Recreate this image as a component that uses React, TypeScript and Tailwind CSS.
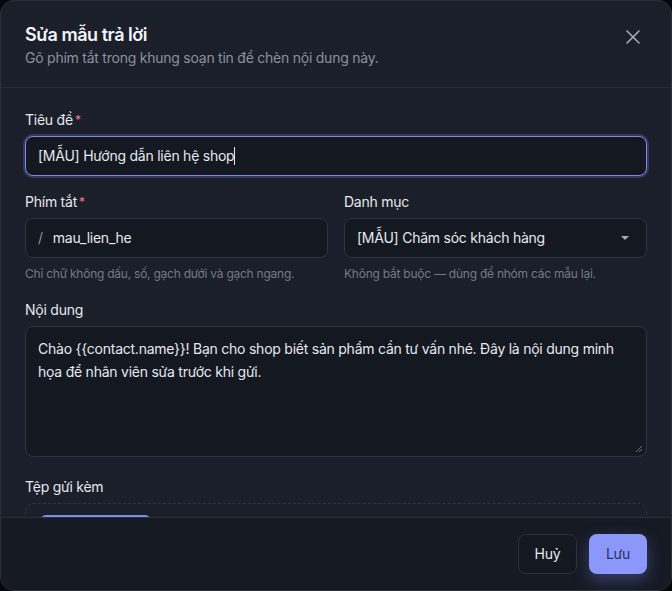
import { X } from 'lucide-react';

const font = { fontFamily: 'Inter, "Noto Sans", sans-serif' };

const bodyText =
  'Chào {{contact.name}}! Bạn cho shop biết sản phẩm cần tư vấn nhé. Đây là nội dung minh họa để nhân viên sửa trước khi gửi.';

function Label({ children, required }: { children: string; required?: boolean }) {
  return (
    <label className="block text-sm leading-5 text-[#e6e8ee] mb-1.5">
      {children}
      {required && <span className="text-[#f47c85] text-[12px] ml-0.5 align-top">*</span>}
    </label>
  );
}

export default function App() {
  return (
    <div className="w-[672px] h-[591px] bg-[#07080b] tracking-[-0.015em]" style={font}>
      <div className="w-full h-full flex flex-col rounded-[14px] border border-[#2b303c] bg-[#1b1f29] overflow-hidden">
        {/* header */}
        <div className="relative px-6 pt-[22px] pb-[19px] border-b border-[#262b36]">
          <h2 className="text-[18px] leading-6 font-semibold text-[#f3f4f7] tracking-[-0.025em]">Sửa mẫu trả lời</h2>
          <p className="text-sm leading-5 mt-px text-[#8a91a0]">Gõ phím tắt trong khung soạn tin để chèn nội dung này.</p>
          <button className="absolute right-[26px] top-[24px] text-[#a3a9b6]">
            <X size={24} strokeWidth={1.6} />
          </button>
        </div>

        {/* body */}
        <div className="flex-1 overflow-hidden px-6 pt-[22px]">
          <div>
            <Label required>Tiêu đề</Label>
            <div className="h-10 rounded-lg border border-[#7c86e6] bg-[#141821] ring-2 ring-[#4b5394]/50 flex items-center px-3 text-sm text-[#e6e8ee]">
              <span>[MẪU] Hướng dẫn liên hệ shop</span>
              <span className="w-px h-[18px] bg-[#e6e8ee]" />
            </div>
          </div>

          <div className="grid grid-cols-2 gap-4 mt-4">
            <div>
              <Label required>Phím tắt</Label>
              <div className="h-10 rounded-lg border border-[#2e3441] bg-[#141821] flex items-center px-3 text-sm text-[#e6e8ee]">
                <span className="text-[#8a91a0] mr-2.5">/</span>
                <span>mau_lien_he</span>
              </div>
              <p className="mt-2 text-xs leading-4 text-[#737a89]">Chỉ chữ không dấu, số, gạch dưới và gạch ngang.</p>
            </div>
            <div>
              <Label>Danh mục</Label>
              <div className="h-10 rounded-lg border border-[#2e3441] bg-[#141821] flex items-center justify-between px-3 text-sm text-[#e6e8ee]">
                <span>[MẪU] Chăm sóc khách hàng</span>
                <svg width="10" height="6" viewBox="0 0 10 6" className="mr-1">
                  <path d="M1 1h8L5 5z" fill="#a3a9b6" />
                </svg>
              </div>
              <p className="mt-2 text-xs leading-4 text-[#737a89]">Không bắt buộc — dùng để nhóm các mẫu lại.</p>
            </div>
          </div>

          <div className="mt-[18px]">
            <Label>Nội dung</Label>
            <div className="relative h-[131px] rounded-lg border border-[#2e3441] bg-[#141821] px-3 py-[10px] text-sm leading-[23px] text-[#e6e8ee]">
              <p>{bodyText}</p>
              <svg width="8" height="8" viewBox="0 0 8 8" className="absolute right-[3px] bottom-[3px]">
                <path d="M7 1 1 7M7 4 4 7" stroke="#6b7282" strokeWidth="1" />
              </svg>
            </div>
          </div>

          <div className="mt-5">
            <Label>Tệp gửi kèm</Label>
            <div className="rounded-lg border border-dashed border-[#2e3441] px-[14px] pt-[11px] h-20">
              <div className="w-[111px] h-9 rounded-md bg-[#2d3352] border-t-2 border-[#7f89ee]" />
            </div>
          </div>
        </div>

        {/* footer */}
        <div className="border-t border-[#2b303c] bg-[#161a23] px-6 py-4 flex justify-end gap-3">
          <button className="h-10 w-[59px] rounded-lg border border-[#2b303c] bg-[#141821] text-sm text-[#e6e8ee]">Huỷ</button>
          <button className="h-10 w-[58px] rounded-lg bg-[#8c98f9] text-sm text-[#2a3066] shadow-[0_6px_16px_rgba(120,134,245,0.35)]">Lưu</button>
        </div>
      </div>
    </div>
  );
}
